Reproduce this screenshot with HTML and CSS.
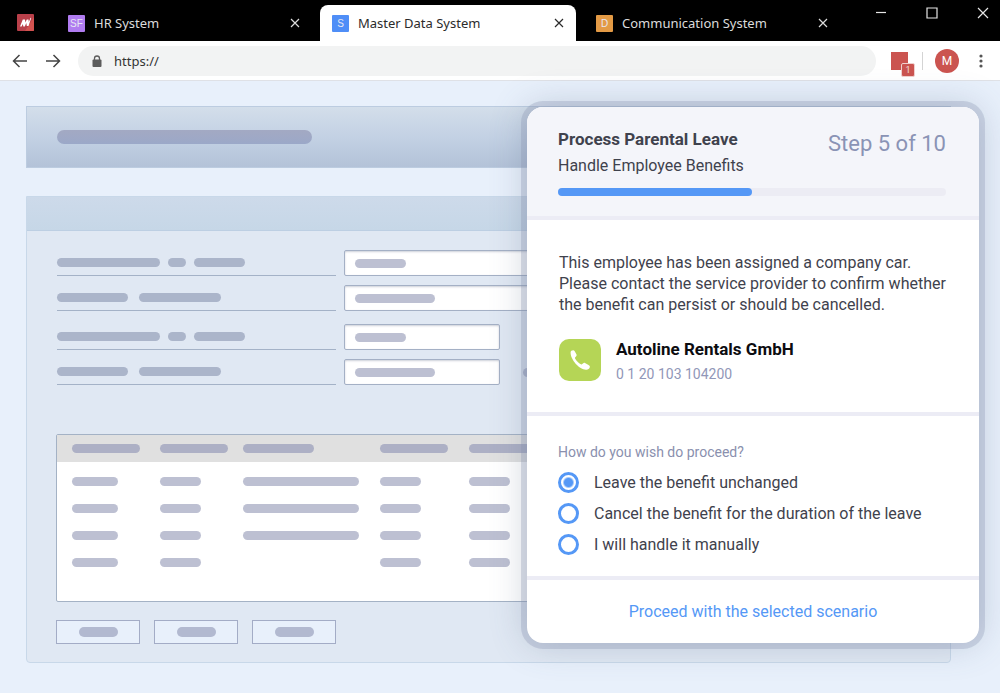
FILE: index.html
```html
<!DOCTYPE html>
<html lang="en">
<head>
    <meta charset="UTF-8">
    <meta name="viewport" content="width=device-width, initial-scale=1.0">
    <title>Master Data System</title>
    <link rel="stylesheet" href="styles.css">
</head>
<body>
    <!-- Browser tabs -->
    <header class="tab-bar">
        <svg class="app-logo" viewBox="0 0 17 17" aria-hidden="true">
            <rect width="17" height="17" rx="1" fill="#b9404a"/>
            <path d="M17 3v13a1 1 0 0 1-1 1H8z" fill="#d2524f"/>
            <path d="M3 12.500L5.800 5.500L8 5.500L8.300 8.500L9.800 5.500L11.500 5.500L11.800 8L13.600 3.800L14.200 4L11.500 12L9.800 12L9.300 9L7.800 12.500L6.300 12.500L5.900 10L4.600 12.500z" fill="#fff"/>
        </svg>
        <div class="tab tab-hr">
            <span class="tab-icon purple">SF</span>
            <span class="tab-title">HR System</span>
            <button type="button" class="close-btn" aria-label="Close HR System">
                <svg viewBox="0 0 10 10"><path d="M1 1l8 8M9 1l-8 8"/></svg>
            </button>
        </div>
        <div class="tab active">
            <span class="tab-icon blue">S</span>
            <span class="tab-title">Master Data System</span>
            <button type="button" class="close-btn" aria-label="Close Master Data System">
                <svg viewBox="0 0 10 10"><path d="M1 1l8 8M9 1l-8 8"/></svg>
            </button>
        </div>
        <div class="tab tab-com">
            <span class="tab-icon orange">D</span>
            <span class="tab-title">Communication System</span>
            <button type="button" class="close-btn" aria-label="Close Communication System">
                <svg viewBox="0 0 10 10"><path d="M1 1l8 8M9 1l-8 8"/></svg>
            </button>
        </div>
        <div class="window-controls">
            <button type="button" aria-label="Minimize"><svg viewBox="0 0 12 12"><path d="M1 5.500h10"/></svg></button>
            <button type="button" aria-label="Maximize"><svg viewBox="0 0 12 12"><path d="M1 1h10v10H1z"/></svg></button>
            <button type="button" aria-label="Close window"><svg viewBox="0 0 12 12"><path d="M1 1l10 10M11 1L1 11"/></svg></button>
        </div>
    </header>

    <!-- Address bar -->
    <nav class="toolbar">
        <button type="button" class="nav-btn" aria-label="Back">
            <svg viewBox="0 0 16 14"><path d="M15 7H1.500M7.500 1l-6 6 6 6"/></svg>
        </button>
        <button type="button" class="nav-btn" aria-label="Forward">
            <svg viewBox="0 0 16 14"><path d="M1 7h13.500M8.500 1l6 6-6 6"/></svg>
        </button>
        <div class="address">
            <svg class="lock" viewBox="0 0 10 12" aria-hidden="true">
                <path d="M2.500 5V3.500a2.500 2.500 0 0 1 5 0V5" fill="none" stroke="#5c5c5c" stroke-width="1.300"/>
                <rect x="0.500" y="4.500" width="9" height="7.500" rx="1" fill="#5c5c5c"/>
            </svg>
            <input type="text" aria-label="Address" value="https://">
        </div>
        <button type="button" class="extension" aria-label="Extension">
            <span class="badge">1</span>
        </button>
        <span class="separator"></span>
        <button type="button" class="avatar">M</button>
        <button type="button" class="menu-btn" aria-label="Menu">
            <svg viewBox="0 0 4 16"><circle cx="2" cy="3" r="1.600"/><circle cx="2" cy="8" r="1.600"/><circle cx="2" cy="13" r="1.600"/></svg>
        </button>
    </nav>

    <main class="content">
        <div class="banner"><span class="bar title-bar"></span></div>

        <section class="card">
            <div class="card-header"></div>
            <div class="card-body">
                <form class="fields">
                    <div class="row">
                        <label for="field-1"><span class="bar w-103"></span><span class="bar w-18"></span><span class="bar w-51"></span></label>
                        <div class="field"><input type="text" id="field-1" aria-label="Field 1"><span class="bar w-51"></span></div>
                    </div>
                    <div class="row">
                        <label for="field-2" class="wide"><span class="bar w-71"></span><span class="bar w-82"></span></label>
                        <div class="field"><input type="text" id="field-2" aria-label="Field 2"><span class="bar w-80"></span></div>
                    </div>
                    <div class="row short group">
                        <label for="field-3"><span class="bar w-103"></span><span class="bar w-18"></span><span class="bar w-51"></span></label>
                        <div class="field"><input type="text" id="field-3" aria-label="Field 3"><span class="bar w-51"></span></div>
                    </div>
                    <div class="row short">
                        <label for="field-4" class="wide"><span class="bar w-71"></span><span class="bar w-82"></span></label>
                        <div class="field"><input type="text" id="field-4" aria-label="Field 4"><span class="bar w-80"></span></div>
                        <span class="bar w-51 note"></span>
                    </div>
                </form>

                <div class="table-box">
                    <table>
                        <colgroup>
                            <col class="col-a"><col class="col-b"><col class="col-c"><col class="col-d"><col>
                        </colgroup>
                        <thead>
                            <tr>
                                <th><span class="bar w-68"></span></th>
                                <th><span class="bar w-68"></span></th>
                                <th><span class="bar w-71"></span></th>
                                <th><span class="bar w-68"></span></th>
                                <th><span class="bar w-68"></span></th>
                            </tr>
                        </thead>
                        <tbody>
                            <tr>
                                <td><span class="bar w-46"></span></td>
                                <td><span class="bar w-41"></span></td>
                                <td><span class="bar w-116"></span></td>
                                <td><span class="bar w-41"></span></td>
                                <td><span class="bar w-41"></span></td>
                            </tr>
                            <tr>
                                <td><span class="bar w-46"></span></td>
                                <td><span class="bar w-41"></span></td>
                                <td><span class="bar w-116"></span></td>
                                <td><span class="bar w-41"></span></td>
                                <td><span class="bar w-41"></span></td>
                            </tr>
                            <tr>
                                <td><span class="bar w-46"></span></td>
                                <td><span class="bar w-41"></span></td>
                                <td><span class="bar w-116"></span></td>
                                <td><span class="bar w-41"></span></td>
                                <td><span class="bar w-41"></span></td>
                            </tr>
                            <tr>
                                <td><span class="bar w-46"></span></td>
                                <td><span class="bar w-41"></span></td>
                                <td></td>
                                <td><span class="bar w-41"></span></td>
                                <td><span class="bar w-41"></span></td>
                            </tr>
                        </tbody>
                    </table>
                </div>

                <div class="actions">
                    <button type="button" aria-label="Action 1"><span class="bar"></span></button>
                    <button type="button" aria-label="Action 2"><span class="bar"></span></button>
                    <button type="button" aria-label="Action 3"><span class="bar"></span></button>
                </div>
            </div>
        </section>

        <!-- Process guide -->
        <form class="guide">
            <div class="guide-header">
                <div class="guide-top">
                    <div>
                        <h1>Process Parental Leave</h1>
                        <h2>Handle Employee Benefits</h2>
                    </div>
                    <span class="step">Step 5 of 10</span>
                </div>
                <div class="progress" role="progressbar" aria-label="Progress" aria-valuemin="0" aria-valuemax="10" aria-valuenow="5">
                    <div class="progress-fill" style="width: 50%"></div>
                </div>
            </div>
            <div class="guide-info">
                <p>This employee has been assigned a company car. Please contact the service provider to confirm whether the benefit can persist or should be cancelled.</p>
                <div class="contact">
                    <button type="button" class="call-btn" aria-label="Call Autoline Rentals GmbH">
                        <svg viewBox="0 0 20 20"><path d="M0.600 2.200C0.600 1 1.800 0.200 3.200 0.200c0.700 0 1.100 0.400 1.500 1.100l1.700 3c0.400 0.800 0.300 1.400-0.400 2.100l-0.700 0.800c-0.400 0.400-0.400 0.800-0.200 1.200 1.200 2.200 3.500 4.600 5.800 5.900 0.500 0.300 0.900 0.200 1.300-0.200l0.800-0.700c0.700-0.700 1.300-0.700 2-0.300l3.500 1.900c1.200 0.700 1.700 1.400 1.200 2.400-0.500 1.300-1.600 2.100-3.200 2.300C10 20.300 0.300 10 0.600 2.200z"/></svg>
                    </button>
                    <div>
                        <div class="contact-name">Autoline Rentals GmbH</div>
                        <div class="contact-phone">0 1 20 103 104200</div>
                    </div>
                </div>
            </div>
            <fieldset class="guide-options">
                <legend>How do you wish do proceed?</legend>
                <label><input type="radio" name="scenario" checked>Leave the benefit unchanged</label>
                <label><input type="radio" name="scenario">Cancel the benefit for the duration of the leave</label>
                <label><input type="radio" name="scenario">I will handle it manually</label>
            </fieldset>
            <button type="button" class="proceed-btn">Proceed with the selected scenario</button>
        </form>
    </main>
</body>
</html>
```
FILE: styles.css
```css
* {
    box-sizing: border-box;
}

body {
    display: flex;
    flex-direction: column;
    min-height: 100vh;
    margin: 0;
    background: #e8f0fb;
    color: #3f424d;
    font-family: Roboto, sans-serif;
}

button {
    padding: 0;
    border: none;
    background: none;
    font-family: inherit;
    cursor: pointer;
}

svg {
    display: block;
}

/* Browser tabs */
.tab-bar {
    display: flex;
    align-items: flex-end;
    height: 41px;
    background: #000;
    font-family: "Noto Sans", sans-serif;
}

.app-logo {
    width: 17px;
    height: 17px;
    margin: 0 17px 10px;
}

.tab {
    display: flex;
    align-items: center;
    height: 36px;
    padding: 0 12px;
    border-radius: 8px 8px 0 0;
    color: #dcdcdc;
    font-size: 13px;
}

.tab-hr {
    flex: 0 1 269px;
    padding: 0 20px 0 17px;
}

.tab.active {
    flex: 0 1 256px;
    background: #fff;
    color: #2b2b2b;
}

.tab-com {
    flex: 0 1 264px;
    padding-left: 20px;
}

.tab-icon {
    width: 17px;
    margin-right: 9px;
    border-radius: 1px;
    color: #e6e6f2;
    font-family: "Liberation Sans", sans-serif;
    font-size: 10px;
    line-height: 17px;
    text-align: center;
}

.purple {
    background: #b07cf0;
}

.blue {
    background: #4f8ef7;
}

.orange {
    background: #e39a45;
}

.tab-title {
    flex: 1;
    white-space: nowrap;
}

.close-btn svg {
    width: 10px;
    height: 10px;
    fill: none;
    stroke: #dcdcdc;
    stroke-width: 1.200;
}

.active .close-btn svg {
    stroke: #2b2b2b;
}

.window-controls {
    display: flex;
    align-self: flex-start;
    gap: 39px;
    margin: 7px 11px 0 auto;
}

.window-controls svg {
    width: 12px;
    height: 12px;
    fill: none;
    stroke: #e6e6e6;
    stroke-width: 1.200;
}

/* Address bar */
.toolbar {
    display: flex;
    align-items: center;
    height: 40px;
    padding: 0 17px 0 12px;
    border-bottom: 1px solid #dfe1e6;
    background: #fff;
}

.nav-btn {
    margin-right: 17px;
}

.nav-btn svg {
    width: 16px;
    height: 14px;
    fill: none;
    stroke: #444;
    stroke-width: 1.500;
}

.address {
    display: flex;
    flex: 1;
    align-items: center;
    gap: 12px;
    height: 30px;
    padding: 0 14px;
    border-radius: 15px;
    background: #f2f3f3;
}

.lock {
    width: 10px;
    height: 12px;
}

.address input {
    flex: 1;
    padding: 0;
    border: none;
    outline: none;
    background: none;
    color: #333;
    font-family: "Noto Sans", sans-serif;
    font-size: 13px;
}

.extension {
    position: relative;
    width: 17px;
    height: 18px;
    margin: 0 14px 0 15px;
    background: #cb5450;
}

.badge {
    position: absolute;
    right: -7px;
    bottom: -7px;
    width: 14px;
    border: 1px solid #f0d0ce;
    border-radius: 2px;
    background: #cb5450;
    color: #f3dcdb;
    font-size: 9px;
    line-height: 12px;
}

.separator {
    width: 1px;
    height: 18px;
    margin-right: 12px;
    background: #d4d4d4;
}

.avatar {
    width: 24px;
    height: 24px;
    margin-right: 20px;
    border-radius: 50%;
    background: #cb5450;
    color: #fff;
    font-size: 12px;
}

.menu-btn svg {
    width: 4px;
    height: 16px;
    fill: #555;
}

/* Page behind the guide */
.content {
    position: relative;
    flex: 1;
    padding: 25px 49px 30px 26px;
}

.bar {
    display: block;
    height: 9px;
    border-radius: 5px;
    background: rgba(124, 130, 166, 0.5);
}

.w-18 { width: 18px; }
.w-41 { width: 41px; }
.w-46 { width: 46px; }
.w-51 { width: 51px; }
.w-68 { width: 68px; }
.w-71 { width: 71px; }
.w-80 { width: 80px; }
.w-82 { width: 82px; }
.w-103 { width: 103px; }
.w-116 { width: 116px; }

.banner {
    display: flex;
    align-items: center;
    height: 62px;
    margin-bottom: 28px;
    padding: 0 30px;
    border: 1px solid #bccce0;
    background: linear-gradient(#d3deea, #c3d1e4 50%, #b3c2d8);
}

.title-bar {
    width: 255px;
    height: 14px;
    border-radius: 7px;
    background: linear-gradient(#a3a9c3, #9ba8c8);
}

.card {
    border: 1px solid #c8d8e9;
    border-radius: 0 0 4px 4px;
    background: #e0e8f3;
}

.card-header {
    height: 34px;
    border-bottom: 1px solid #bdcfe3;
    background: linear-gradient(#cddaea, #c6d7e7);
}

.card-body {
    padding: 19px 30px 18px 29px;
}

.row {
    display: grid;
    grid-template-columns: 280fr 575fr;
    gap: 8px;
    height: 26px;
    margin-bottom: 9px;
}

.row.short {
    grid-template-columns: 280fr 155fr 412fr;
}

.row.group {
    margin-top: 13px;
}

.row label {
    display: flex;
    align-items: center;
    gap: 8px;
    margin-left: 1px;
    border-bottom: 1px solid #a4b2c7;
}

.row label.wide {
    gap: 11px;
}

.row label .bar {
    background: #abb5ca;
}

.field {
    display: grid;
    align-items: center;
}

.field > * {
    grid-area: 1 / 1;
}

.field input {
    width: 100%;
    height: 26px;
    border: 1px solid #a4b0c5;
    border-radius: 2px;
    background: #fff;
    box-shadow: inset 0 1px 2px rgba(90, 100, 130, 0.3);
}

.field .bar {
    margin-left: 11px;
}

.note {
    align-self: center;
    margin-left: 15px;
}

.table-box {
    margin-top: 49px;
    padding-bottom: 25px;
    border: 1px solid #a4b2c5;
    border-radius: 2px;
    background: #fff;
}

table {
    width: 100%;
    border-collapse: collapse;
    table-layout: fixed;
}

.col-a { width: 88px; }
.col-b { width: 83px; }
.col-c { width: 137px; }
.col-d { width: 89px; }

thead {
    background: #e0e0e0;
}

th, td {
    height: 27px;
    padding: 0 0 0 15px;
}

th .bar {
    background: #adb0c5;
}

tbody tr:first-child td {
    height: 33px;
    padding-top: 6px;
}

.actions {
    display: flex;
    gap: 14px;
    margin-top: 18px;
}

.actions button {
    display: flex;
    align-items: center;
    justify-content: center;
    width: 84px;
    height: 24px;
    border: 1px solid #a3acc6;
    background: #e8f0fb;
}

.actions .bar {
    width: 39px;
    height: 10px;
}

/* Process guide */
.guide {
    position: absolute;
    top: 26px;
    right: 21px;
    width: 452px;
    border-radius: 16px;
    background: #fff;
    box-shadow: 0 0 0 6px rgba(135, 145, 175, 0.3), 0 0 36px rgba(80, 100, 130, 0.3);
    overflow: hidden;
}

.guide-header {
    padding: 22px 33px 20px 31px;
    border-bottom: 4px solid #ececf5;
    background: #f4f5fa;
}

.guide-top {
    display: flex;
    justify-content: space-between;
}

h1, h2 {
    margin: 0;
    font-size: 17px;
    line-height: 20px;
}

h2 {
    margin-top: 7px;
    font-size: 16px;
    font-weight: 400;
}

.step {
    color: #8a93b5;
    font-size: 22px;
    line-height: 30px;
}

.progress {
    height: 8px;
    margin-top: 12px;
    border-radius: 4px;
    background: #ececf4;
}

.progress-fill {
    height: 100%;
    border-radius: 4px;
    background: #5598f6;
}

.guide-info {
    padding: 32px 32px 28px;
    border-bottom: 4px solid #ececf5;
}

.guide-info p {
    margin: 0;
    font-size: 16px;
    line-height: 21px;
}

.contact {
    display: flex;
    gap: 15px;
    margin-top: 24px;
}

.call-btn {
    display: flex;
    align-items: center;
    justify-content: center;
    width: 42px;
    height: 42px;
    border-radius: 10px;
    background: #b5d556;
}

.call-btn svg {
    width: 20px;
    height: 20px;
    fill: #fff;
}

.contact-name {
    color: #0c0c10;
    font-size: 17px;
    font-weight: 700;
    line-height: 20px;
}

.contact-phone {
    margin-top: 5px;
    color: #9197b8;
    font-size: 14px;
    line-height: 20px;
}

.guide-options {
    display: flex;
    flex-direction: column;
    gap: 10px;
    margin: 0;
    padding: 26px 31px 21px;
    border: none;
    border-bottom: 4px solid #ececf5;
}

.guide-options legend {
    float: left;
    padding: 0;
    color: #8a90ae;
    font-size: 14px;
    line-height: 20px;
}

.guide-options label {
    display: flex;
    align-items: center;
    gap: 15px;
    font-size: 16px;
    line-height: 21px;
}

.guide-options input {
    width: 21px;
    height: 21px;
    margin: 0;
    border: 3px solid #5598f6;
    border-radius: 50%;
    background: #fff;
    appearance: none;
}

.guide-options input:checked {
    background: radial-gradient(circle, #5598f6 4px, #fff 6px);
}

.proceed-btn {
    display: block;
    width: 100%;
    height: 63px;
    color: #5598f6;
    font-size: 16px;
}
```
